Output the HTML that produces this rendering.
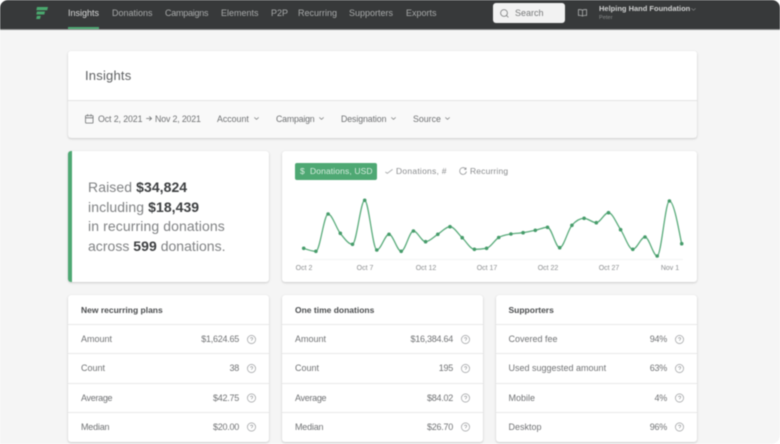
<!DOCTYPE html>
<html><head><meta charset="utf-8">
<style>
html,body{margin:0;padding:0;background:#fff}
body{width:780px;height:444px;overflow:hidden;position:relative;font-family:"Liberation Sans",sans-serif}
#w{position:absolute;left:0;top:0;width:780px;height:444px;background:#f5f5f5;border-radius:8px 8px 9px 0;overflow:hidden;filter:blur(.45px)}
#n{position:absolute;left:0;top:0;width:780px;height:29px;background:#37393a;border-bottom:1px solid #8a8c8c;box-sizing:content-box}
.t{position:absolute;white-space:nowrap;line-height:12px}
.n{top:7px;font-size:9px;color:#a8aaaa;letter-spacing:0}
.c{position:absolute;background:#fff;border-radius:3px;box-shadow:0 1px 2px rgba(0,0,0,.16),0 0 1px rgba(0,0,0,.1)}
.f{top:113px;font-size:8.8px;color:#6f7173;letter-spacing:0}
.big{font-size:14px;line-height:20px;color:#808284;letter-spacing:.1px;left:88px}
.big b{color:#3c3e40;letter-spacing:.05px}
.h{font-size:8.5px;font-weight:bold;color:#4a4c4e;letter-spacing:0}
.l{font-size:9px;color:#707274;letter-spacing:0}
.v{font-size:9px;color:#707274;letter-spacing:-.25px;text-align:right;width:80px}
.x{font-size:7px;color:#8b8d8f;width:40px;text-align:center;top:263px;letter-spacing:0}
.hr{position:absolute;height:1px;background:#e8e9e9}
svg{position:absolute;overflow:visible}
</style></head><body>
<div id="w">
<div id="n"></div>
<svg style="left:36px;top:7px" width="12" height="12" viewBox="0 0 12 12"><path d="M1 0H12L11.2 3.2H.3Z M.9 4.5H9L8.3 7.5H.3Z M.9 8.9H4.8L4 12H.2Z" fill="#4aa86e"/></svg>
<div class="t n" style="left:68px;color:#d8d9d9">Insights</div>
<div style="position:absolute;left:68px;top:27px;width:31px;height:2px;background:#4ea873"></div>
<div class="t n" style="left:112px">Donations</div>
<div class="t n" style="left:165px;letter-spacing:-.25px">Campaigns</div>
<div class="t n" style="left:221px">Elements</div>
<div class="t n" style="left:271px">P2P</div>
<div class="t n" style="left:298px">Recurring</div>
<div class="t n" style="left:349px">Supporters</div>
<div class="t n" style="left:406px">Exports</div>
<div style="position:absolute;left:493px;top:3px;width:72px;height:20px;background:#f2f2f2;border-radius:3px"></div>
<svg style="left:500px;top:9px" width="9" height="9" viewBox="0 0 9 9" fill="none" stroke="#77797a" stroke-width=".8"><circle cx="4" cy="4" r="3.4"/><path d="M6.5 6.5L8.4 8.4"/></svg>
<div class="t" style="left:515px;top:7px;font-size:9px;color:#77797a;letter-spacing:0">Search</div>
<svg style="left:578px;top:9px" width="9" height="8" viewBox="0 0 9 8" fill="none" stroke="#b0b2b2" stroke-width=".8"><path d="M4.5 1.2C3.5 .6 2 .5 .4 .6V6.4C2 6.3 3.5 6.4 4.5 7.1C5.5 6.4 7 6.3 8.6 6.4V.6C7 .5 5.5 .6 4.5 1.2V7.1"/></svg>
<div class="t" style="left:599px;top:3px;font-size:7.5px;font-weight:bold;color:#d0d1d1;letter-spacing:0">Helping Hand Foundation</div>
<svg style="left:691px;top:8px" width="5" height="3" viewBox="0 0 5 3" fill="none" stroke="#8a8c8c" stroke-width=".6"><path d="M.4 .4L2.5 2.3L4.6 .4"/></svg>
<div class="t" style="left:599px;top:12px;font-size:5.5px;color:#8a8c8c;letter-spacing:.1px">Peter</div>

<div class="c" style="left:68px;top:51px;width:629px;height:87px;background:#f9f9f9"></div>
<div style="position:absolute;left:68px;top:51px;width:629px;height:49px;background:#fff;border-radius:3px 3px 0 0;border-bottom:1px solid #e3e4e4"></div>
<div class="t" style="left:85px;top:70px;font-size:13px;color:#5e6062;letter-spacing:.2px">Insights</div>
<svg style="left:85px;top:114px" width="9" height="10" viewBox="0 0 9 10" fill="none" stroke="#6f7173" stroke-width=".8"><rect x=".5" y="1.5" width="7.6" height="7.6" rx="1"/><path d="M.5 3.8H8.1M2.6 .3V2.2M6 .3V2.2"/></svg>
<div class="t f" style="left:98px;letter-spacing:-.1px">Oct 2, 2021</div>
<svg style="left:146px;top:116px" width="6" height="5" viewBox="0 0 6 5" fill="none" stroke="#6f7173" stroke-width=".8"><path d="M.2 2.5H5.4M3.3 .4L5.5 2.5L3.3 4.6"/></svg>
<div class="t f" style="left:155px;letter-spacing:-.15px">Nov 2, 2021</div>
<div class="t f" style="left:217px">Account</div>
<svg style="left:254px;top:117px" width="5" height="3" viewBox="0 0 5 3" fill="none" stroke="#77797a" stroke-width=".7"><path d="M.3 .4L2.5 2.4L4.7 .4"/></svg>
<div class="t f" style="left:276px;letter-spacing:-.2px">Campaign</div>
<svg style="left:319px;top:117px" width="5" height="3" viewBox="0 0 5 3" fill="none" stroke="#77797a" stroke-width=".7"><path d="M.3 .4L2.5 2.4L4.7 .4"/></svg>
<div class="t f" style="left:341px;letter-spacing:-.1px">Designation</div>
<svg style="left:391px;top:117px" width="5" height="3" viewBox="0 0 5 3" fill="none" stroke="#77797a" stroke-width=".7"><path d="M.3 .4L2.5 2.4L4.7 .4"/></svg>
<div class="t f" style="left:413px">Source</div>
<svg style="left:445px;top:117px" width="5" height="3" viewBox="0 0 5 3" fill="none" stroke="#77797a" stroke-width=".7"><path d="M.3 .4L2.5 2.4L4.7 .4"/></svg>

<div class="c" style="left:68px;top:151px;width:201px;height:131px;overflow:hidden"><div style="position:absolute;left:0;top:0;width:4px;height:131px;background:#4ea873"></div></div>
<div class="t big" style="top:177px;line-height:20px">Raised <b>$34,824</b></div>
<div class="t big" style="top:197px;line-height:20px">including <b>$18,439</b></div>
<div class="t big" style="top:216px;line-height:20px">in recurring donations</div>
<div class="t big" style="top:236px;line-height:20px;letter-spacing:.02px">across <b>599</b> donations.</div>

<div class="c" style="left:282px;top:151px;width:415px;height:131px"></div>
<div style="position:absolute;left:295px;top:163px;width:82px;height:17px;background:#4ea873;border-radius:2px"></div>
<div class="t" style="left:300px;top:165px;font-size:8.5px;color:#d7ecdf">$</div>
<div class="t" style="left:310px;top:165px;font-size:8.5px;color:#d7ecdf;letter-spacing:.12px">Donations, USD</div>
<svg style="left:385px;top:169px" width="8" height="5" viewBox="0 0 8 5" fill="none" stroke="#a9abac" stroke-width=".9"><path d="M.3 3L2.3 4.3L7.6 .4"/></svg>
<div class="t" style="left:396px;top:165px;font-size:8.5px;color:#8a8c8e;letter-spacing:.25px">Donations, #</div>
<svg style="left:459px;top:167px" width="8" height="8" viewBox="0 0 8 8" fill="none" stroke="#8a8c8e" stroke-width=".7"><path d="M6.9 2.2A3.4 3.4 0 1 0 7.4 4.4M7 .5V2.4H5.2"/></svg>
<div class="t" style="left:470px;top:165px;font-size:8.5px;color:#8a8c8e;letter-spacing:.15px">Recurring</div>
<div class="hr" style="left:303px;top:259px;width:380px;background:#f3f4f4"></div>
<svg style="left:0;top:0" width="780" height="444" viewBox="0 0 780 444">
<path fill="none" stroke="#5bac7c" stroke-width="1.3" d="M303.7 248.3c4.06 1.5 8.13 3 12.19 3c4.06 0 8.13 -37.3 12.19 -37.3c4.06 0 8.13 14.25 12.19 19.3c4.06 5.05 8.13 11 12.19 11c4.06 0 8.13 -44 12.19 -44c4.06 0 8.13 49.7 12.19 49.7c4.06 0 8.13 -15.7 12.19 -15.7c4.06 0 8.13 17 12.19 17c4.06 0 8.13 -20.3 12.19 -20.3c4.06 0 8.13 10.7 12.19 10.7c4.06 0 8.13 -4.9 12.19 -7.4c4.06 -2.5 8.13 -7.6 12.19 -7.6c4.06 0 8.13 7.23 12.19 11c4.06 3.77 8.13 11.6 12.19 11.6c4.06 0 8.13 -.33 12.19 -1c4.06 -.67 8.13 -8.47 12.19 -10.8c4.06 -2.33 8.13 -2.7 12.19 -3.5c4.06 -.8 8.13 -.68 12.19 -1.3c4.06 -.62 8.13 -1.5 12.19 -2.4c4.06 -.9 8.13 -3 12.19 -3c4.06 0 8.13 20.4 12.19 20.4c4.06 0 8.13 -17.73 12.19 -22.4c4.06 -4.67 8.13 -7 12.19 -7c4.06 0 8.13 4.4 12.19 4.4c4.06 0 8.13 -10 12.19 -10c4.06 0 8.13 10.9 12.19 17c4.06 6.1 8.13 19.6 12.19 19.6c4.06 0 8.13 -12.3 12.19 -12.3c4.06 0 8.13 19 12.19 19c4.06 0 8.13 -55 12.19 -55c4.06 0 8.13 21.35 12.19 42.7"/>
<g fill="#479c6b">
<circle cx="303.7" cy="248.3" r="1.8"/><circle cx="315.9" cy="251.3" r="1.8"/><circle cx="328.1" cy="214" r="1.8"/><circle cx="340.3" cy="233.3" r="1.8"/><circle cx="352.5" cy="244.3" r="1.8"/><circle cx="364.7" cy="200.3" r="1.8"/><circle cx="376.8" cy="250" r="1.8"/><circle cx="389" cy="234.3" r="1.8"/><circle cx="401.2" cy="251.3" r="1.8"/><circle cx="413.4" cy="231" r="1.8"/><circle cx="425.6" cy="241.7" r="1.8"/><circle cx="437.8" cy="234.3" r="1.8"/><circle cx="450" cy="226.7" r="1.8"/><circle cx="462.2" cy="237.7" r="1.8"/><circle cx="474.4" cy="249.3" r="1.8"/><circle cx="486.6" cy="248.3" r="1.8"/><circle cx="498.7" cy="237.5" r="1.8"/><circle cx="510.9" cy="234" r="1.8"/><circle cx="523.1" cy="232.7" r="1.8"/><circle cx="535.3" cy="230.3" r="1.8"/><circle cx="547.5" cy="227.3" r="1.8"/><circle cx="559.7" cy="247.7" r="1.8"/><circle cx="571.9" cy="225.3" r="1.8"/><circle cx="584.1" cy="218.3" r="1.8"/><circle cx="596.3" cy="222.7" r="1.8"/><circle cx="608.5" cy="212.7" r="1.8"/><circle cx="620.6" cy="229.7" r="1.8"/><circle cx="632.8" cy="249.3" r="1.8"/><circle cx="645" cy="237" r="1.8"/><circle cx="657.2" cy="256" r="1.8"/><circle cx="669.4" cy="201" r="1.8"/><circle cx="681.7" cy="243.7" r="1.8"/>
</g>
</svg>
<div class="t x" style="left:284px">Oct 2</div>
<div class="t x" style="left:345px">Oct 7</div>
<div class="t x" style="left:406px">Oct 12</div>
<div class="t x" style="left:467px">Oct 17</div>
<div class="t x" style="left:528px">Oct 22</div>
<div class="t x" style="left:589px">Oct 27</div>
<div class="t x" style="left:650px">Nov 1</div>

<div class="c" style="left:68px;top:295px;width:201px;height:147px"></div>
<div class="c" style="left:282px;top:295px;width:201px;height:147px"></div>
<div class="c" style="left:496px;top:295px;width:201px;height:147px"></div>
<div class="hr" style="left:68px;top:324px;width:201px"></div><div class="hr" style="left:68px;top:353px;width:201px"></div><div class="hr" style="left:68px;top:383px;width:201px"></div><div class="hr" style="left:68px;top:412px;width:201px"></div>
<div class="hr" style="left:282px;top:324px;width:201px"></div><div class="hr" style="left:282px;top:353px;width:201px"></div><div class="hr" style="left:282px;top:383px;width:201px"></div><div class="hr" style="left:282px;top:412px;width:201px"></div>
<div class="hr" style="left:496px;top:324px;width:201px"></div><div class="hr" style="left:496px;top:353px;width:201px"></div><div class="hr" style="left:496px;top:383px;width:201px"></div><div class="hr" style="left:496px;top:412px;width:201px"></div>

<div class="t h" style="left:81px;top:304px">New recurring plans</div>
<div class="t l" style="left:81px;top:333px">Amount</div><div class="t v" style="left:159px;top:333px">$1,624.65</div>
<div class="t l" style="left:81px;top:362px">Count</div><div class="t v" style="left:159px;top:362px">38</div>
<div class="t l" style="left:81px;top:392px;letter-spacing:-.3px">Average</div><div class="t v" style="left:159px;top:392px">$42.75</div>
<div class="t l" style="left:81px;top:421px;letter-spacing:-.2px">Median</div><div class="t v" style="left:159px;top:421px">$20.00</div>

<div class="t h" style="left:295px;top:304px">One time donations</div>
<div class="t l" style="left:295px;top:333px">Amount</div><div class="t v" style="left:373px;top:333px">$16,384.64</div>
<div class="t l" style="left:295px;top:362px">Count</div><div class="t v" style="left:373px;top:362px">195</div>
<div class="t l" style="left:295px;top:392px;letter-spacing:-.3px">Average</div><div class="t v" style="left:373px;top:392px">$84.02</div>
<div class="t l" style="left:295px;top:421px;letter-spacing:-.2px">Median</div><div class="t v" style="left:373px;top:421px">$26.70</div>

<div class="t h" style="left:508.5px;top:304px">Supporters</div>
<div class="t l" style="left:508.5px;top:333px">Covered fee</div><div class="t v" style="left:587px;top:333px">94%</div>
<div class="t l" style="left:508.5px;top:362px">Used suggested amount</div><div class="t v" style="left:587px;top:362px">63%</div>
<div class="t l" style="left:508.5px;top:392px">Mobile</div><div class="t v" style="left:587px;top:392px">4%</div>
<div class="t l" style="left:508.5px;top:421px">Desktop</div><div class="t v" style="left:587px;top:421px">96%</div>

<svg style="left:0;top:0" width="780" height="444" viewBox="0 0 780 444">
<g fill="none" stroke="#9a9c9e" stroke-width=".7">
<circle cx="251.5" cy="339.5" r="4.1"/><circle cx="251.5" cy="368.5" r="4.1"/><circle cx="251.5" cy="398" r="4.1"/><circle cx="251.5" cy="427" r="4.1"/>
<circle cx="465.5" cy="339.5" r="4.1"/><circle cx="465.5" cy="368.5" r="4.1"/><circle cx="465.5" cy="398" r="4.1"/><circle cx="465.5" cy="427" r="4.1"/>
<circle cx="679.5" cy="339.5" r="4.1"/><circle cx="679.5" cy="368.5" r="4.1"/><circle cx="679.5" cy="398" r="4.1"/><circle cx="679.5" cy="427" r="4.1"/>
<path d="M250.3 338.6c.2-1.4 2.5-1.2 2.4.2c0 .8-1.2 .9-1.2 1.9M250.3 367.6c.2-1.4 2.5-1.2 2.4.2c0 .8-1.2 .9-1.2 1.9M250.3 397.1c.2-1.4 2.5-1.2 2.4.2c0 .8-1.2 .9-1.2 1.9M250.3 426.1c.2-1.4 2.5-1.2 2.4.2c0 .8-1.2 .9-1.2 1.9"/>
<path d="M464.3 338.6c.2-1.4 2.5-1.2 2.4.2c0 .8-1.2 .9-1.2 1.9M464.3 367.6c.2-1.4 2.5-1.2 2.4.2c0 .8-1.2 .9-1.2 1.9M464.3 397.1c.2-1.4 2.5-1.2 2.4.2c0 .8-1.2 .9-1.2 1.9M464.3 426.1c.2-1.4 2.5-1.2 2.4.2c0 .8-1.2 .9-1.2 1.9"/>
<path d="M678.3 338.6c.2-1.4 2.5-1.2 2.4.2c0 .8-1.2 .9-1.2 1.9M678.3 367.6c.2-1.4 2.5-1.2 2.4.2c0 .8-1.2 .9-1.2 1.9M678.3 397.1c.2-1.4 2.5-1.2 2.4.2c0 .8-1.2 .9-1.2 1.9M678.3 426.1c.2-1.4 2.5-1.2 2.4.2c0 .8-1.2 .9-1.2 1.9"/>
</g>
</svg>
</div>
</body></html>
